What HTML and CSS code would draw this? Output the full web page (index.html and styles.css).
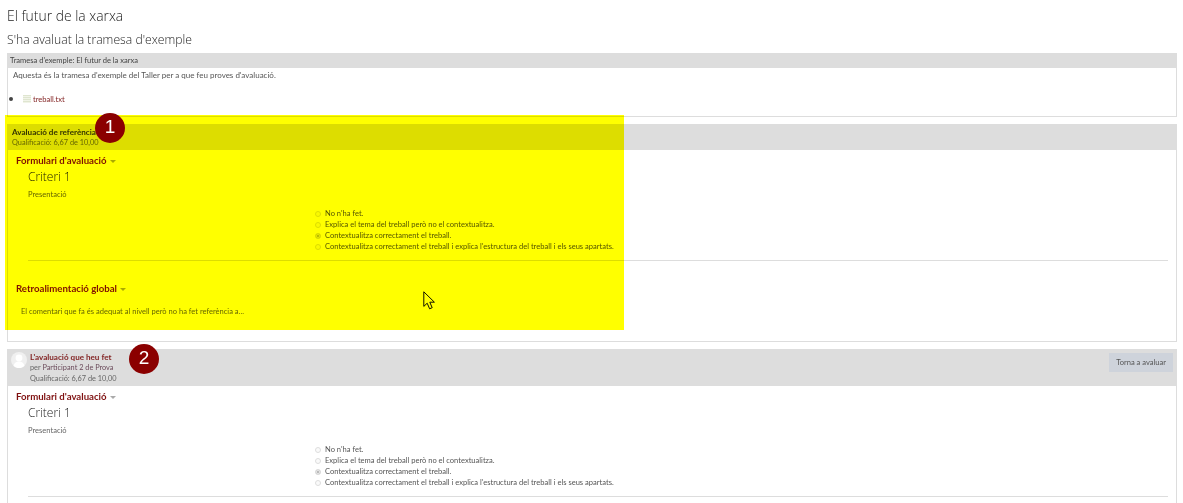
FILE: index.html
```html
<!DOCTYPE html>
<html lang="ca">
<head>
<meta charset="utf-8">
<title>El futur de la xarxa</title>
<link rel="stylesheet" href="styles.css">
</head>
<body>
<main class="page">
  <h2 class="title">El futur de la xarxa</h2>
  <h3 class="subtitle">S'ha avaluat la tramesa d'exemple</h3>

  <section class="box box-sample">
    <header class="sample-head">Tramesa d'exemple: El futur de la xarxa</header>
    <div class="sample-body">
      <p class="sample-text">Aquesta és la tramesa d'exemple del Taller per a que feu proves d'avaluació.</p>
      <ul class="files">
        <li><span class="file-icon"></span><a class="link" href="#">treball.txt</a></li>
      </ul>
    </div>
  </section>

  <section class="box box-ref">
    <header class="assess-head head-ref">
      <div>
        <div class="assess-title dark">Avaluació de referència</div>
        <div class="assess-line">Qualificació: 6,67 de 10,00</div>
      </div>
    </header>
    <div class="assess-body">
      <div class="toggle">Formulari d'avaluació <span class="caret"></span></div>
      <div class="criterion">
        <div class="crit-name">Criteri 1</div>
        <div class="crit-desc">Presentació</div>
        <ul class="options">
          <li><span class="radio"></span>No n'ha fet.</li>
          <li><span class="radio"></span>Explica el tema del treball però no el contextualitza.</li>
          <li><span class="radio on"></span>Contextualitza correctament el treball.</li>
          <li><span class="radio"></span>Contextualitza correctament el treball i explica l'estructura del treball i els seus apartats.</li>
        </ul>
        <hr class="rule">
      </div>
      <div class="toggle toggle-global">Retroalimentació global <span class="caret"></span></div>
      <p class="comment">El comentari que fa és adequat al nivell però no ha fet referència a...</p>
    </div>
  </section>

  <section class="box box-own">
    <header class="assess-head head-own">
      <svg class="avatar" viewBox="0 0 16 16" aria-hidden="true">
        <circle cx="8" cy="8" r="8" fill="#f0f0f0"/>
        <circle cx="8" cy="6" r="3.4" fill="#fff"/>
        <path d="M2.6 14c.6-3.2 2.8-4.4 5.4-4.4s4.800 1.200 5.400 4.400a8 8 0 0 1-10.800 0z" fill="#fff"/>
      </svg>
      <div class="own-text">
        <div class="assess-title"><a class="link" href="#">L'avaluació que heu fet</a></div>
        <div class="assess-line">per <a class="link-plain" href="#">Participant 2 de Prova</a></div>
        <div class="assess-line">Qualificació: 6,67 de 10,00</div>
      </div>
      <a class="btn" href="#">Torna a avaluar</a>
    </header>
    <div class="assess-body">
      <div class="toggle">Formulari d'avaluació <span class="caret"></span></div>
      <div class="criterion">
        <div class="crit-name">Criteri 1</div>
        <div class="crit-desc">Presentació</div>
        <ul class="options">
          <li><span class="radio"></span>No n'ha fet.</li>
          <li><span class="radio"></span>Explica el tema del treball però no el contextualitza.</li>
          <li><span class="radio on"></span>Contextualitza correctament el treball.</li>
          <li><span class="radio"></span>Contextualitza correctament el treball i explica l'estructura del treball i els seus apartats.</li>
        </ul>
        <hr class="rule">
      </div>
    </div>
  </section>
</main>

<svg class="cursor" viewBox="0 0 13 19" aria-hidden="true">
  <path d="M.8.8v14.600l3.400-3.200 2.400 5.600 2.600-1.100-2.400-5.500h4.600z" fill="#fff" stroke="#111" stroke-width="1"/>
</svg>
<div class="highlight"></div>
<span class="badge badge-1">1</span>
<span class="badge badge-2">2</span>
</body>
</html>
```
FILE: styles.css
```css
* { box-sizing: border-box; }
html, body { margin: 0; height: 503px; overflow: hidden; background: #fff; }
body {
  position: relative;
  font-family: Lato, "Open Sans", sans-serif;
  font-size: 7.550px;
  color: #444;
}
.page { padding: 0 6px 0 7px; }
.title, .subtitle { margin: 0; font-family: "Open Sans", sans-serif; font-weight: 300; color: #222; line-height: 18px; }
.title { padding-top: 7px; font-size: 13.900px; }
.subtitle { padding-top: 6px; margin-bottom: 4px; font-size: 12.200px; }

.box { border: 1px solid #ddd; border-top: 0; margin-bottom: 7px; overflow: hidden; }
.box-sample { height: 64px; }
.box-ref { height: 218px; }
.box-own { height: 154px; margin-bottom: 0; border-bottom: 0; }

.sample-head { height: 15px; background: #ddd; padding-left: 2px; line-height: 15px; color: #444; }
.sample-body { padding: 2px 5px; }
.sample-text { margin: 0; line-height: 11px; color: #555; font-size: 8px; }
.files { margin: 11px 0 0; padding: 0 0 0 10px; line-height: 12px; }
.files li::marker { font-size: 11px; }
.file-icon { display: inline-block; width: 8px; height: 8px; margin: 0 2px -1px 0; background: repeating-linear-gradient(#dfe5d0 0 1px, #f1f4e8 1px 2px); }
.link { color: #7f1d1d; text-decoration: none; }
.link-plain { color: #6a4a5a; text-decoration: none; }

.assess-head { display: flex; align-items: center; background: #ddd; }
.head-ref { height: 26px; padding: 0 4px; }
.head-own { height: 37px; padding: 0 3px; }
.assess-title { font-weight: 700; font-size: 8.100px; line-height: 10px; }
.assess-title.dark { color: #333; }
.assess-line { line-height: 11px; color: #666; font-size: 7.350px; }
.avatar { align-self: flex-start; margin: 3px 3px 0 0; width: 16px; height: 16px; flex: none; }
.own-text { flex: 1; }
.btn { align-self: flex-start; margin-top: 4px; height: 19px; line-height: 19px; padding: 0 7px; background: #ced3db; color: #555; text-decoration: none; }

.assess-body { padding: 4px 8px 0; }
.toggle { color: #7f1010; font-size: 9.650px; font-weight: 700; line-height: 13px; }
.caret { display: inline-block; margin-left: 1px; vertical-align: 1px; border: 3px solid transparent; border-top-color: #aaa; border-bottom: 0; }
.criterion { padding: 0 0 0 12px; }
.crit-name { font-family: "Open Sans", sans-serif; font-weight: 300; font-size: 12px; line-height: 18px; color: #222; margin-top: 1px; }
.crit-desc { line-height: 11px; margin-top: 3px; color: #666; }
.options { list-style: none; margin: 8px 0 0; padding: 0 0 0 287px; line-height: 11px; color: #555; }
.options li { display: flex; align-items: center; height: 11px; white-space: nowrap; }
.radio { width: 6px; height: 6px; flex: none; margin-right: 4px; border: 1px solid #ddd; border-radius: 50%; background: #fafafa; }
.radio.on { background: #aaa; box-shadow: inset 0 0 0 1px #eee; }
.rule { margin: 8px 0 0; border: 0; border-top: 1px solid #ddd; }
.toggle-global { margin-top: 21px; }
.comment { margin: 11px 0 0 5px; line-height: 11px; color: #666; }

.highlight { position: absolute; left: 5px; top: 115px; width: 619px; height: 215px; background: #ff0; mix-blend-mode: multiply; }
.badge { position: absolute; width: 30px; height: 30px; line-height: 28px; border-radius: 50%; background: #8b0000; color: #fff; text-align: center; font-family: "Liberation Sans", sans-serif; font-size: 19px; }
.badge-1 { left: 95px; top: 113px; }
.badge-2 { left: 129px; top: 344px; }
.cursor { position: absolute; left: 423px; top: 291px; width: 13px; height: 19px; }
```
